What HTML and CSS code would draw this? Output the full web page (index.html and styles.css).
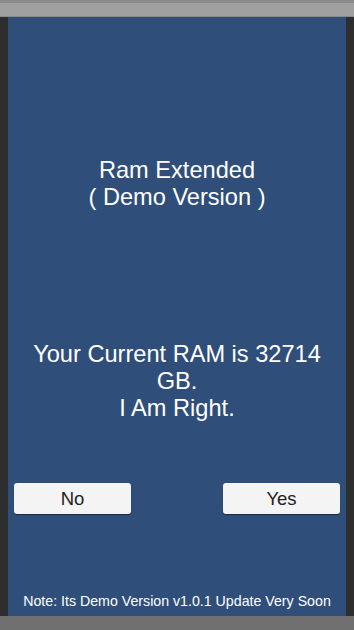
FILE: index.html
```html
<!DOCTYPE html>
<html lang="en">
<head>
    <meta name="viewport" content="width=device-width, initial-scale=1.0" />
    <title>Ram Extended</title>
    <link rel="stylesheet" href="styles.css">
</head>
<body>
    <div class="top-bar"></div>
    <div class="main-row">
        <div class="side"></div>
        <div class="panel">
            <h3 class="title">Ram Extended<br>( Demo Version )</h3>
            <p class="message">Your Current RAM is 32714 GB.<br>I Am Right.</p>
            <div class="buttons">
                <button class="btn">No</button>
                <button class="btn">Yes</button>
            </div>
            <p class="note">Note: Its Demo Version v1.0.1 Update Very Soon</p>
        </div>
        <div class="side"></div>
    </div>
    <div class="bottom-bar"></div>
</body>
</html>
```

FILE: styles.css
```css
* {
    padding: 0;
    margin: 0;
    box-sizing: border-box;
    font-family: "Liberation Sans", Arial, sans-serif;
}
body {
    width: 354px;
    height: 630px;
    background-color: #333333;
    display: flex;
    flex-direction: column;
    overflow: hidden;
}
.top-bar {
    height: 17px;
    background-color: #a0a0a0;
    border-top: 3px solid #8a8a8a;
    border-bottom: 1px solid #8c8c8c;
}
.main-row {
    flex: 1;
    display: flex;
}
.side {
    width: 8px;
    background-color: #2e2e2e;
}
.panel {
    flex: 1;
    background-color: #304e7a;
    display: flex;
    flex-direction: column;
    align-items: center;
    color: #ffffff;
    padding-top: 140px;
}
.title, .message {
    font-size: 23.6px;
    font-weight: 400;
    line-height: 27px;
    text-align: center;
}
.message {
    margin-top: 130px;
    padding: 0 14px;
}
.buttons {
    width: 100%;
    display: flex;
    justify-content: space-between;
    padding: 0 6px;
    margin-top: 61px;
}
.btn {
    width: 117px;
    height: 31px;
    background-color: #f4f4f4;
    border: none;
    border-radius: 3px;
    box-shadow: 0 1px 1px rgba(0, 0, 0, 0.45);
    font-size: 18.5px;
    color: #222222;
}
.note {
    margin-top: auto;
    margin-bottom: 7px;
    font-size: 14.2px;
    line-height: 16px;
}
.bottom-bar {
    height: 14px;
    background-color: #707070;
}
```
